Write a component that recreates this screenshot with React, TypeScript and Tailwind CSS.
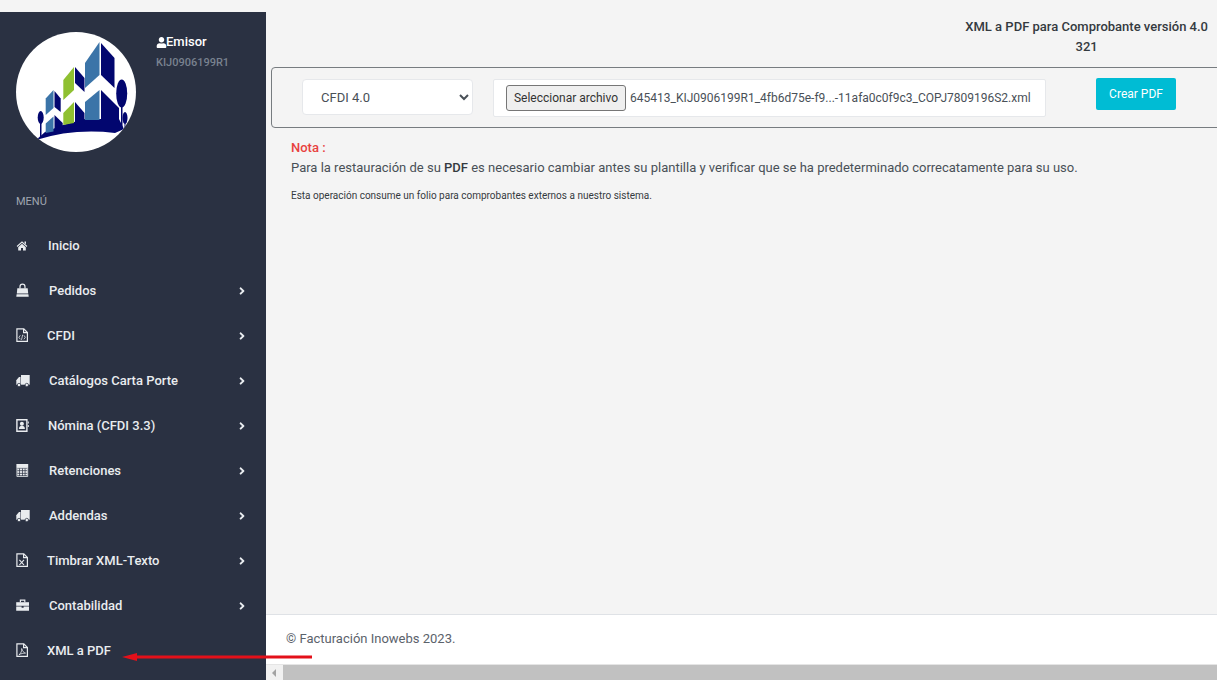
import { FaAngleRight, FaUser } from "react-icons/fa";
import type { ReactNode } from "react";

type MenuItem = {
  label: string;
  icon: ReactNode;
  shift: string;
  arrow?: boolean;
};

const fileOutline = (
  <>
    <path d="M.9.9h6.900l3.600 3.600v8.900H.9z" fill="none" stroke="currentColor" strokeWidth="1.200" />
    <path d="M7.600.9v3.800h3.800" fill="none" stroke="currentColor" strokeWidth="1.200" />
  </>
);

const truck = (
  <>
    <path d="M5 2h8.700v9.700H5z" fill="currentColor" />
    <path d="M.3 7.200 3 4h1.500v7.700H.3z" fill="currentColor" />
    <circle cx="3" cy="12" r="1.700" fill="currentColor" stroke="#2a3142" strokeWidth=".7" />
    <circle cx="10.800" cy="12" r="1.700" fill="currentColor" stroke="#2a3142" strokeWidth=".7" />
  </>
);

const calcCells = [5.600, 8.100, 10.600].flatMap((y) => [1.300, 4, 6.700, 9.400].map((x) => ({ x, y })));

const icons = {
  home: (
    <>
      <path d="M.7 8.100 6 3.300l5.300 4.800-.7.800L6 4.800 1.400 8.900z" fill="currentColor" />
      <path d="M8.500 3.500H10v2.700L8.500 4.900z" fill="currentColor" />
      <path d="M2.200 9.200 6 5.800l3.800 3.400V12.500H7V9.900H5v2.600H2.200z" fill="currentColor" />
    </>
  ),
  bag: (
    <>
      <path d="M1.300 5.200h10.400l.5 5.300H.8z" fill="currentColor" />
      <path d="M.6 11.300h11.800l.3 2.400H.3z" fill="currentColor" />
      <path d="M4 5.500V3.700a2.500 2.500 0 0 1 5 0v1.800" fill="none" stroke="currentColor" strokeWidth="1.200" />
    </>
  ),
  fileCode: (
    <>
      {fileOutline}
      <path d="M4.300 7.300 2.900 9.300l1.400 2M7.900 7.300l1.400 2-1.400 2M6.700 6.700 5.500 11.900" fill="none" stroke="currentColor" strokeWidth=".8" />
    </>
  ),
  truck,
  nomina: (
    <>
      <path d="M.9 1.700h10v11.500H.9z" fill="none" stroke="currentColor" strokeWidth="1.400" />
      <circle cx="5.900" cy="5.800" r="2" fill="currentColor" />
      <path d="M2.900 11c0-2.500 1.200-3.200 3-3.200s3 .7 3 3.200z" fill="currentColor" />
      <path d="M11.800 3.500h1v2h-1zM11.800 7h1v2h-1z" fill="currentColor" />
    </>
  ),
  calc: (
    <>
      <path d="M.4 1h11.800v3.800H.4z" fill="currentColor" />
      <path d="M.9 4.800h10.800v8.700H.9z" fill="none" stroke="currentColor" strokeWidth=".8" />
      {calcCells.map((c) => (
        <rect key={`${c.x}-${c.y}`} x={c.x} y={c.y} width="2" height="1.800" fill="currentColor" />
      ))}
    </>
  ),
  fileExcel: (
    <>
      {fileOutline}
      <path d="M3.400 6.800 8 12M8 6.800 3.400 12" fill="none" stroke="currentColor" strokeWidth="1.100" />
    </>
  ),
  briefcase: (
    <>
      <path d="M.2 4.200H13v3.600H.2z" fill="currentColor" />
      <path d="M.2 8.500h5.400v1.300h2V8.500H13v4.200H.2z" fill="currentColor" />
      <path d="M4.400 4.200V2.200h4.400v2" fill="none" stroke="currentColor" strokeWidth="1.200" />
    </>
  ),
  filePdf: (
    <>
      {fileOutline}
      <path d="M2.900 11.800c1.900-1 3.300-4.300 2.800-6.300.5 2.600 2.200 4.300 3.800 4.600-2 0-4.600.5-6.600 1.700z" fill="none" stroke="currentColor" strokeWidth=".8" />
    </>
  ),
};

const menuItems: MenuItem[] = [
  { label: "Inicio", icon: icons.home, shift: "ml-0" },
  { label: "Pedidos", icon: icons.bag, shift: "ml-px", arrow: true },
  { label: "CFDI", icon: icons.fileCode, shift: "-ml-px", arrow: true },
  { label: "Catálogos Carta Porte", icon: icons.truck, shift: "ml-px", arrow: true },
  { label: "Nómina (CFDI 3.3)", icon: icons.nomina, shift: "ml-0", arrow: true },
  { label: "Retenciones", icon: icons.calc, shift: "ml-px", arrow: true },
  { label: "Addendas", icon: icons.truck, shift: "ml-px", arrow: true },
  { label: "Timbrar XML-Texto", icon: icons.fileExcel, shift: "-ml-px", arrow: true },
  { label: "Contabilidad", icon: icons.briefcase, shift: "ml-px", arrow: true },
  { label: "XML a PDF", icon: icons.filePdf, shift: "-ml-px" },
];

function Logo() {
  return (
    <div className="w-[120px] h-[120px] rounded-full bg-white overflow-hidden shrink-0">
      <svg viewBox="0 0 120 120" className="w-full h-full">
        <g fill="#02066f">
          <path d="M20 108 29 100 47 93 69 87 103 87 108 97 99 101Q58 96 20 108z" />
          <path d="M85 11 98.500 26v30L85 43z" />
          <path d="M85 58 103 76v20H85z" />
          <path d="M59 35 68.500 46v14L59 51z" />
          <path d="M59 70 68.500 81v12H59z" />
          <path d="M38.500 59 44.700 66.500V80L38.500 75z" />
          <path d="M38.500 83 46.700 91v10H38.500z" />
          <ellipse cx="105.700" cy="61.500" rx="5.500" ry="14" />
          <rect x="105" y="70" width="1.500" height="25" />
          <ellipse cx="109" cy="86" rx="2.500" ry="6" />
          <rect x="108.500" y="88" width="1" height="9" />
          <ellipse cx="24.700" cy="85.500" rx="3" ry="6.500" />
          <rect x="24" y="88" width="1.500" height="18" />
        </g>
        <g fill="#3b74a8">
          <path d="M83.500 10 69 31v25l14.500-13z" />
          <path d="M83.500 58 69 70v18h14.500z" />
          <path d="M37.500 58 29.700 66.500V83l7.800-7z" />
          <path d="M37.500 84.500 29.700 91.500V101l7.800-1.500z" />
        </g>
        <g fill="#8fc031">
          <path d="M58 35 47.300 48v20L58 58z" />
          <path d="M58 70 47.300 81v12L58 91z" />
        </g>
      </svg>
    </div>
  );
}

function Sidebar() {
  return (
    <aside className="w-[266px] shrink-0 bg-[#2a3142] overflow-hidden">
      <div className="flex pt-5 pl-4">
        <Logo />
        <div className="ml-5">
          <div className="flex items-center h-5 text-[13px] font-medium text-white">
            <FaUser className="text-[11px] -mr-px" />
            <span>Emisor</span>
          </div>
          <div className="mt-[3px] text-[11px] leading-4 font-medium text-[#79828f]">KIJ0906199R1</div>
        </div>
      </div>
      <div className="mt-[42px] pl-4 text-[11px] leading-4 text-[#a0a6b0]">MENÚ</div>
      <nav className="mt-[13px]">
        {menuItems.map((item) => (
          <div key={item.label} className="flex items-center h-[45px] pl-4 text-[#e9ecef]">
            <div className="w-8 h-[14px] -mt-[2px]">
              <svg viewBox="0 0 14 14" className="block w-[14px] h-[14px]">
                {item.icon}
              </svg>
            </div>
            <span className={`text-[13px] font-medium ${item.shift}`}>{item.label}</span>
            {item.arrow && <FaAngleRight className="ml-auto mr-[18px] text-[12px]" />}
          </div>
        ))}
      </nav>
    </aside>
  );
}

function UploadBox() {
  return (
    <div className="flex items-start h-[61px] mt-[10px] ml-[5px] -mr-2 pl-[30px] pt-[11px] border border-[#777c80] rounded-[4px]">
      <select className="w-[171px] h-[36px] pl-[14px] pr-2 bg-white border border-[#e6e8eb] rounded-[4px] text-[13px] text-[#495057]">
        <option>CFDI 4.0</option>
      </select>
      <div className="flex items-center w-[553px] h-[38px] ml-[20px] pl-3 bg-white border border-[#e6e8eb] rounded-[2px] text-[12px] text-[#495057]">
        <button className="w-[120px] h-[26px] whitespace-nowrap bg-[#efefef] border border-[#767676] rounded-[3px] text-[#333] text-[12px]">
          Seleccionar archivo
        </button>
        <span className="ml-1 whitespace-nowrap">645413_KIJ0906199R1_4fb6d75e-f9...-11afa0c0f9c3_COPJ7809196S2.xml</span>
      </div>
      <button className="w-[80px] h-[32px] ml-[50px] -mt-px bg-[#00bcd4] rounded-[2px] text-[12px] text-white">Crear PDF</button>
    </div>
  );
}

export default function App() {
  return (
    <div className="relative flex h-[680px] pt-3 bg-[#f4f4f4] overflow-hidden font-['Roboto',sans-serif]">
      <Sidebar />
      <main className="flex-1 min-w-0 flex flex-col">
        <div className="flex justify-end pr-[9px] pt-[5px] text-[13px] leading-5 font-medium text-[#343a40] text-center">
          <div>
            XML a PDF para Comprobante versión 4.0
            <br />
            321
          </div>
        </div>
        <UploadBox />
        <div className="pl-[25px] pt-[10px] text-[13px] text-[#495057]">
          <div className="leading-5 font-medium text-[#e8413f]">Nota :</div>
          <p className="leading-5">
            Para la restauración de su <b className="font-medium text-[#343a40]">PDF</b> es necesario cambiar antes su plantilla y verificar que se ha predeterminado correcatamente para su uso.
          </p>
          <p className="mt-[10px] text-[10px] leading-4 text-[#343a40]">Esta operación consume un folio para comprobantes externos a nuestro sistema.</p>
        </div>
        <footer className="mt-auto h-[50px] flex items-center pl-5 pb-[2px] bg-white border-t border-[#dfe2e6] text-[13px] text-[#5b626b]">
          © Facturación Inowebs 2023.
        </footer>
        <div className="flex items-center h-[16px] bg-[#f1f1f1] border-t border-[#e5e5e5]">
          <div className="ml-[6px] w-0 h-0 border-y-[4px] border-y-transparent border-r-[4px] border-r-[#a3a3a3]" />
          <div className="ml-[7px] flex-1 h-full bg-[#c1c1c1]" />
        </div>
      </main>
      <svg className="absolute left-[120px] top-[650px] w-[195px] h-[14px]" viewBox="0 0 195 14">
        <path d="M2 7 17 3V5.500H192V8.500H17V11z" fill="#e3101a" />
      </svg>
    </div>
  );
}
